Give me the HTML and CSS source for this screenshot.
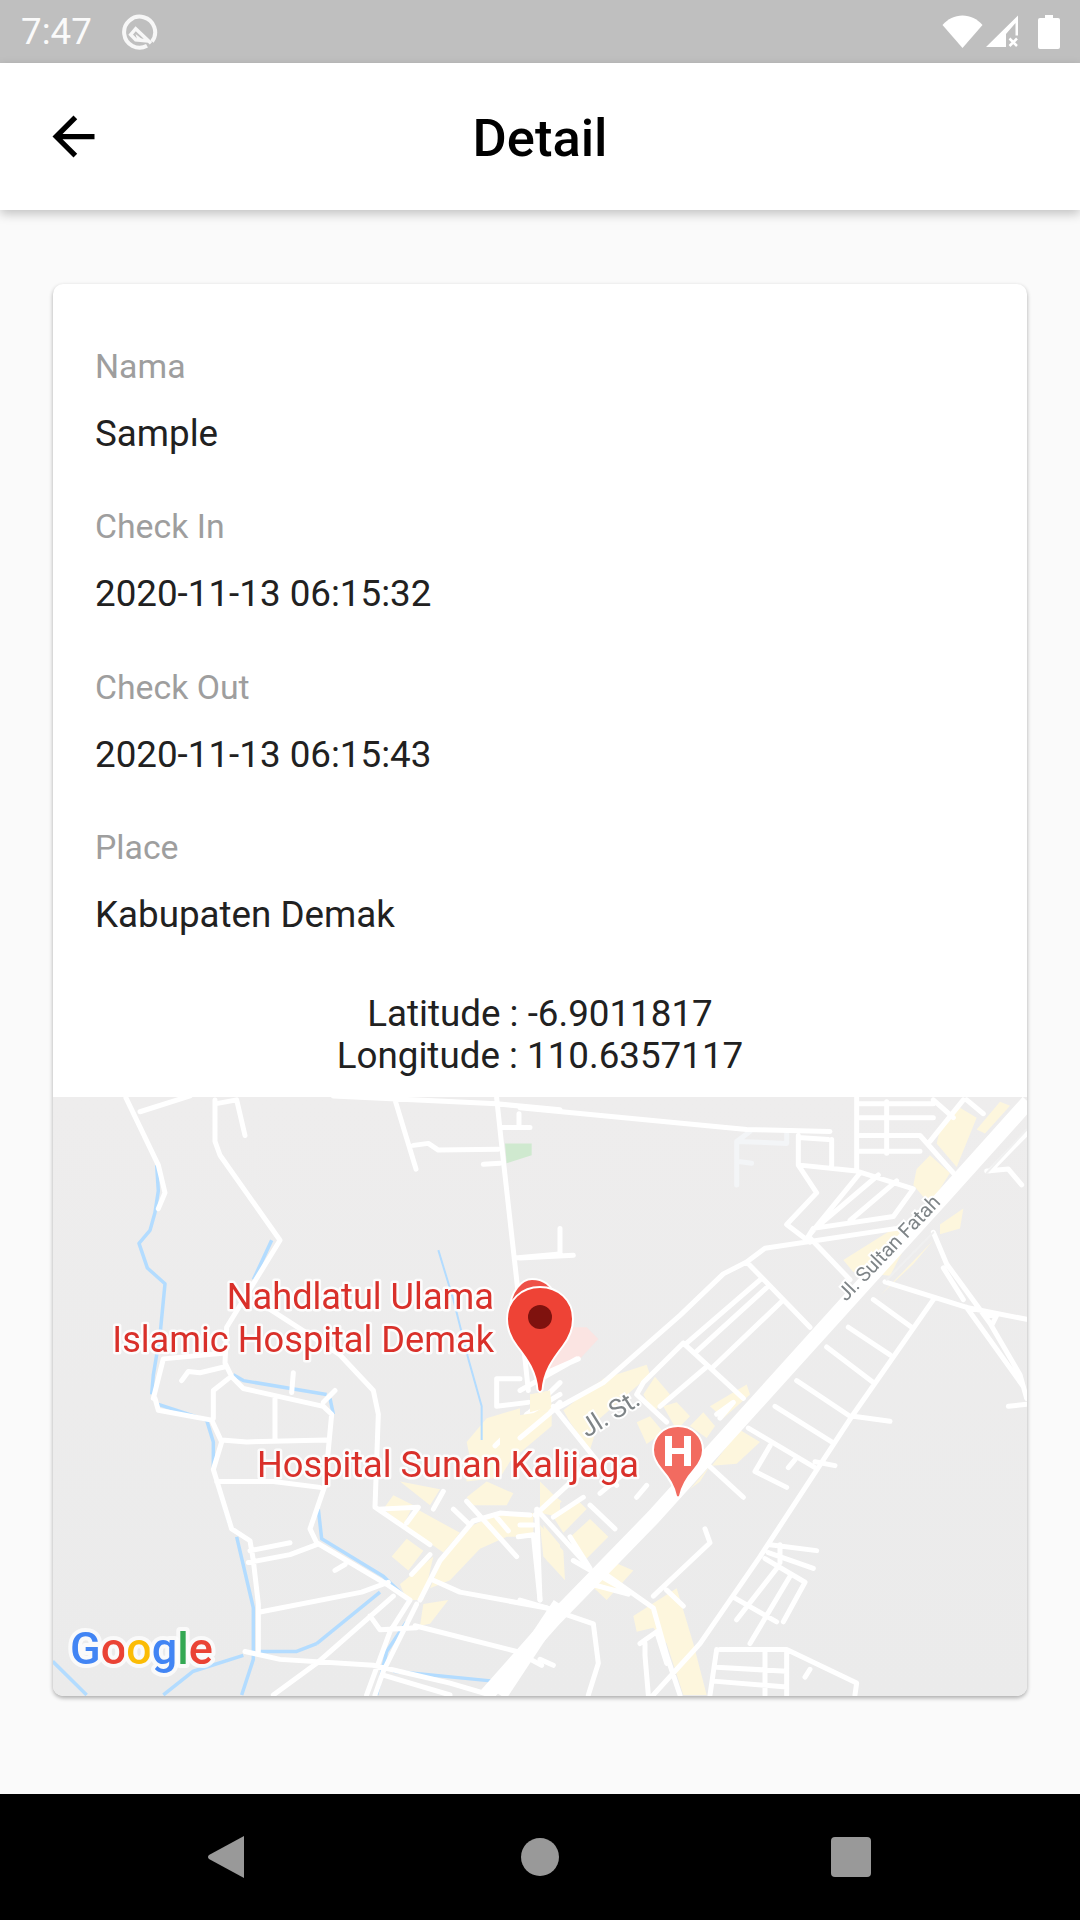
FILE: index.html
```html
<!DOCTYPE html>
<html lang="id">
<head>
<meta charset="utf-8">
<title>Detail</title>
<link rel="stylesheet" href="styles.css">
</head>
<body>
<div class="screen">
  <header class="status">
    <div class="status-left">
      <span class="time">7:47</span>
      <svg class="q-icon" viewBox="0 0 36 36"><path class="ring" d="M30 27.500A15.500 15.500 0 1 0 25 31.800"/><path class="q-line" d="M29 29.300 13.700 14.700 8.700 20.700 13.700 25.700 26.300 27"/><path class="q-fill" d="M13.500 20 20 25H15Z"/></svg>
    </div>
    <div class="status-right">
      <svg class="wifi" viewBox="0 0 41 33"><path d="M20.500 33 .5 10C6 4 12.500 .5 20.500 .5S35 4 40.500 10Z"/></svg>
      <svg class="signal" viewBox="0 0 36 33"><path d="M1 32 33 .5V20.500H30.500V8L21 19V32Z"/><path class="x" d="M24.500 23.500 32 31M32 23.500 24.500 31"/></svg>
      <svg class="battery" viewBox="0 0 22 34"><path d="M7 0H15V3H20Q22 3 22 5V32Q22 34 20 34H2Q0 34 0 32V5Q0 3 2 3H7Z"/></svg>
    </div>
  </header>
  <div class="appbar">
    <svg class="back" viewBox="0 0 24 24"><path d="M20 11H7.830l5.590-5.590L12 4l-8 8 8 8 1.410-1.410L7.830 13H20v-2z"/></svg>
    <h1 class="title">Detail</h1>
  </div>
  <main class="body">
    <section class="card">
      <div class="fields">
        <div class="field"><div class="label">Nama</div><div class="value">Sample</div></div>
        <div class="field"><div class="label">Check In</div><div class="value">2020-11-13 06:15:32</div></div>
        <div class="field"><div class="label">Check Out</div><div class="value">2020-11-13 06:15:43</div></div>
        <div class="field"><div class="label">Place</div><div class="value">Kabupaten Demak</div></div>
      </div>
      <div class="coords">
        <div>Latitude : -6.9011817</div>
        <div>Longitude : 110.6357117</div>
      </div>
      <svg class="map" viewBox="53 1097 974 599" preserveAspectRatio="none">
        <g transform="translate(40 1090) scale(.33333 .3954)">
          <path class="park" d="M1395 135H1475V165L1400 185Z"/>
          <path class="block" d="M1470 770 1530 760 1535 810 1470 820ZM1280 890 1340 830 1440 805V830L1340 910 1290 930ZM1030 1060 1060 1025 1120 1050 1090 1100ZM1130 1060 1260 1120 1210 1170 1100 1105ZM1055 1180 1100 1135 1150 1165 1105 1215ZM1080 990 1200 1010 1170 1050ZM1280 1030 1340 990 1420 1020 1400 1050 1300 1050ZM1210 1180 1300 1100 1380 1070H1480V1130H1400L1320 1160 1230 1240 1170 1260ZM1080 1250 1180 1180 1150 1290H1100ZM1150 1300 1225 1290 1170 1350 1140 1355ZM1500 990 1560 1040V1080L1500 1070ZM1510 1100 1560 1150V1220L1520 1190ZM1330 910 1450 830 1440 900 1380 980 1280 990 1270 940Z"/>
          <path class="water" d="M350 190 355 255 345 310 330 355 297 388 322 450 375 490 360 620 340 720 335 770M355 795 500 835 520 890 520 960 570 1100M590 1130 640 1310V1440L605 1530M835 1060 845 1135 1030 1230 1105 1290M870 780 880 820M580 720 610 735 860 770M640 480 695 380M830 1400 770 1420H650M830 1400 1020 1270M1100 1345 1040 1420 1010 1530M1060 1470 1360 1495M38 1445 140 1530M370 1530 460 1470 610 1430"/>
          <path class="water thin" d="M1195 405 1240 530 1285 680 1325 800V885"/>
          <path class="road" d="M258 20 355 190 375 260 355 300M300 55 450 15M525 25V130L540 165 720 380 640 490 560 600 555 690 575 725 610 755 850 800 875 820 855 1000 810 1110 830 1145 1040 1250 1110 1290M525 35 590 25 615 115M1065 25 1128 200M1120 140 1165 135 1195 152 1375 150M1330 188 1380 185M880 15 1370 35 1560 50M1370 20 1385 140 1430 480 1465 760M1385 95H1470M1437 60V95M1425 425 1560 415M690 555 810 620 900 670 1000 760 1015 820 1005 1055 1170 1150M340 780 370 680 555 665M345 780 355 810 515 835 545 890 520 960 575 1110 630 1140 640 1190 655 1300V1420M425 735 445 712 480 715 555 700M565 730 520 760V830M705 780V880M545 885 620 890 860 885M530 990H700L840 1005M760 715 755 765M850 790 885 760M630 1165 750 1145M625 1195 750 1175 830 1150M660 1320 965 1270 1045 1245M885 1215 915 1200M615 1420 720 1440 1000 1455 1230 1500 1350 1530M700 1530 830 1450 1060 1280M990 1330 1020 1365 1130 1360M1110 1290 1050 1370 980 1530M1130 1300 1030 1470 1005 1530M1180 1240 1260 1270 1520 1310M1125 1355 1430 1420M1030 1480 1230 1530M1140 1290 1200 1190 1300 1090 1380 1070 1470 1075M1370 1080 1405 1115M1435 1130 1480 1125 1500 1290M1100 1095 1135 1055 1015 1060M1115 1225 1170 1175M1180 1060 1210 1015M1240 1060 1290 1100M1280 1040 1430 1180M1365 900 1560 740M1410 920 1560 790M1500 1440 1540 1455M1370 770 1370 800 1465 790M1370 770V730H1440M1460 820 1560 770"/>
          <path class="road wide" d="M1560 1300 1380 1530"/>
        </g>
        <g transform="translate(520 1090) scale(.33333 .3954)">
          <path class="pink" d="M150 600H200L235 630 180 680 90 715 60 700Z"/>
          <path class="block" d="M30 770 90 760 95 800 30 815ZM-60 830 95 810V850L-60 960ZM130 810 250 730 380 695 390 720 240 830 210 910 150 840ZM370 770 405 725 450 770 400 815ZM430 800 470 790 510 825 470 860ZM350 840 390 825 430 865 380 895ZM510 850 550 815 585 850 560 880ZM575 950 660 860 720 890 650 945ZM510 1010 570 950 540 990ZM570 800 680 745 690 770 610 830ZM60 1000 125 1040 90 1075 60 1060ZM100 1080 170 1035 200 1060 130 1120ZM145 1135 210 1085 265 1130 200 1185ZM60 1100 130 1165 135 1240 70 1180ZM270 1190 340 1215 260 1290 210 1250ZM340 1330 415 1290 470 1260 520 1400 560 1530H490L440 1400 400 1360 350 1370ZM970 430 1140 340 1190 340 1110 470 1000 460ZM1080 520 1240 380 1180 440ZM1260 340 1330 300 1320 350 1260 365ZM1190 200 1230 165 1290 210 1230 290 1180 240ZM1260 100 1310 40 1370 70 1310 195 1250 135ZM1370 100 1440 30 1470 40 1395 110Z"/>
          <path class="road faint" d="M650 240V130L690 105M650 130 800 135V110M650 180 695 185"/>
          <path class="road" d="M0 45 680 100 930 105M0 95H25M120 350V418M0 425 160 418M835 115V190L890 260M835 120 925 125M840 190 1010 205 1180 250 1120 320 880 350 865 370 990 480M935 125V195M1010 20V200M1100 30V160M1015 35H1240M1020 70H1240M1020 115H1200L1300 210M1020 155H1200M890 260 800 340 870 385M865 370 1020 210M900 340 1075 215M990 330 1130 230M1240 25 1300 70M1330 25 1230 130M1340 25 1390 60M680 435 735 400 1130 350 1180 340M680 435 610 465 480 570 250 740 100 810 0 880M680 435 870 600M720 480 500 640M740 500 525 665M785 535 580 700M490 640 670 780M490 640 370 740 350 770 440 840M560 700 420 800M1060 530 1175 600M985 600 1110 670M920 650 1060 740M830 735 990 825M765 800 935 890M685 855 885 955M885 940 945 950M1240 530 1000 820 720 1180 540 1400 400 1530M1000 825 1110 838M1095 485 1340 550 1520 580M1240 360 1280 440 1410 590 1500 720 1520 780M1270 450 1330 530M1340 550 1510 750M1400 570H1430L1415 595M1465 800 1520 795M1400 205 1465 200 1505 240M1520 110 1410 205M750 900 705 965 800 1005M825 935 805 955M560 945 670 1030M555 1110 570 1145 400 1280M750 1150 890 1165M745 1170 880 1210M735 1185 855 1245 790 1345M780 1150V1195M645 1285 770 1345M770 1210 650 1340M810 1230 690 1400M600 1415H800L1010 1500 1005 1530M570 1530 590 1415M590 1460 800 1470M580 1495 800 1510M735 1415V1530M800 1415V1530M870 1465 855 1485M240 1215 400 1310 440 1430 480 1530M440 1265 490 1305M360 1400 410 1370 440 1450M375 1400V1430L385 1530M0 1290 80 1310 220 1350 235 1450 205 1530M20 1435 65 1455M50 1060 60 1290M40 1100H0M210 1050 285 1110M100 1080 190 1030M60 1070 210 1210 150 1130M160 1190 325 1270M215 1250 325 1275M100 800 290 1000M45 1075 180 970M240 1020 340 950M350 1030 380 1000M590 820 640 790 600 830M0 760 170 680M80 715 175 680"/>
          <path class="road mid" d="M1520 100 1400 210M1240 360 1100 480"/>
          <path class="road wide" d="M1525 30 1280 260 1000 520 700 800 400 1080 100 1340-100 1530"/>
        </g>
        <text class="road-name road-sm" transform="translate(587 1438) rotate(-32)">Jl. St.</text>
        <text class="road-name" transform="translate(846 1302) rotate(-46)">Jl. Sultan Fatah</text>
        <text class="poi" x="494" y="1309" text-anchor="end">Nahdlatul Ulama</text>
        <text class="poi" x="494" y="1352" text-anchor="end">Islamic Hospital Demak</text>
        <text class="poi" x="257" y="1477">Hospital Sunan Kalijaga</text>
        <g transform="translate(678 1426)">
          <path class="h-pin" d="M-2 70C-4 60-8 53-16 44-22 37-25 31-25 24-25 10-14 0 0 0S25 10 25 24C25 31 22 37 16 44 8 53 4 60 2 70Q0 73-2 70Z"/>
          <path class="h-mark" d="M-13 10H-6V22H6V10H13V40H6V28H-6V40H-13Z"/>
        </g>
        <path class="pin-back" d="M510 1310C510 1291 522 1279 532 1279S553 1284 556 1300L540 1330Z"/>
        <path class="pin" d="M537.500 1390C536 1372 528 1360 517 1346 510 1337 507 1328 507 1319 507 1300 522 1287 540 1287S573 1300 573 1319C573 1328 570 1337 563 1346 552 1360 544 1372 542.500 1390Q540 1394 537.500 1390Z"/>
        <circle class="pin-dot" cx="540" cy="1317" r="12"/>
        <text class="google" x="70" y="1664"><tspan class="g-blue">G</tspan><tspan class="g-red">o</tspan><tspan class="g-yellow">o</tspan><tspan class="g-blue">g</tspan><tspan class="g-green">l</tspan><tspan class="g-red">e</tspan></text>
      </svg>
    </section>
  </main>
  <nav class="navbar">
    <svg class="nav-back" viewBox="0 0 38 44"><path d="M37 1V43L2 24Q0 22 2 20Z"/></svg>
    <span class="nav-home"></span>
    <span class="nav-recent"></span>
  </nav>
</div>
</body>
</html>
```
FILE: styles.css
```css
* { box-sizing: border-box; }
html, body { margin: 0; padding: 0; }
body { font-family: Roboto, "Noto Sans", sans-serif; background: #fafafa; }
.screen { width: 1080px; height: 1920px; display: flex; flex-direction: column; overflow: hidden; }

.status { height: 63px; flex: none; background: #bfbfbf; display: flex; justify-content: space-between; align-items: center; padding: 0 20px 0 21px; color: #fff; }
.status-left { display: flex; align-items: center; gap: 30px; }
.time { font-size: 36.750px; line-height: 44px; color: #fafafa; }
.q-icon { width: 36px; height: 36px; }
.ring { fill: none; stroke: #f7f7f7; stroke-width: 4; }
.q-line { fill: none; stroke: #f7f7f7; stroke-width: 3.500; }
.q-fill { fill: #f7f7f7; }
.status-right { display: flex; align-items: center; gap: 2px; }
.status-right svg { fill: #fff; display: block; }
.wifi { width: 41px; height: 33px; }
.signal { width: 36px; height: 33px; }
.signal .x { fill: none; stroke: #fff; stroke-width: 2.500; }
.battery { width: 22px; height: 34px; margin-left: 15px; }

.appbar { height: 147px; flex: none; position: relative; z-index: 2; background: #fff; box-shadow: 0 4px 10px rgba(0,0,0,.22); display: flex; align-items: center; justify-content: center; padding-top: 2px; }
.back { position: absolute; left: 42px; top: 42px; width: 63px; height: 63px; fill: #000; }
.title { margin: 0; font-size: 52.500px; font-weight: 500; color: #000; line-height: 62px; }

.body { flex: 1; padding: 74px 53px 0; }
.card { background: #fff; border-radius: 10px; box-shadow: 0 2px 4px rgba(0,0,0,.32); overflow: hidden; height: 1412px; display: flex; flex-direction: column; }
.fields { padding: 63px 42px 0; display: flex; flex-direction: column; gap: 51.300px; }
.label { font-size: 33.800px; line-height: 39px; color: #9e9e9e; }
.value { font-size: 36.750px; line-height: 44px; color: #212121; margin-top: 26px; }
.coords { margin-top: 56px; font-size: 36.750px; line-height: 42px; text-align: center; color: #212121; }
.map { display: block; width: 974px; height: 599px; margin-top: auto; filter: blur(.7px); background: linear-gradient(#eeeded, #ebebeb); }

.park { fill: #cfe9cf; }
.pink { fill: #fbe4e2; }
.block { fill: #fdf6dd; }
.water { fill: none; stroke: #b3dcff; stroke-width: 3.500px; stroke-linejoin: round; vector-effect: non-scaling-stroke; }
.water.thin { stroke-width: 2px; }
.road { fill: none; stroke: #fff; stroke-width: 5px; stroke-linecap: round; stroke-linejoin: round; vector-effect: non-scaling-stroke; }
.road.faint { stroke: #f3f5f7; }
.road.mid { stroke-width: 2px; stroke: #f0f0f0; }
.road.wide { stroke-width: 15px; stroke-linecap: butt; }
.road-name { font-size: 20px; fill: #7e8487; stroke: #fff; stroke-width: 4px; paint-order: stroke; }
.road-sm { font-size: 26px; }
.poi { font-size: 36.200px; fill: #d9302a; stroke: #fff; stroke-width: 5px; stroke-opacity: .85; paint-order: stroke; stroke-linejoin: round; }
.h-pin { fill: #f26b60; stroke: #fff; stroke-width: 2; }
.h-mark { fill: #fff; }
.pin { fill: #ee4336; stroke: #fff; stroke-width: 2; }
.pin-back { fill: #ee5148; stroke: #fff; stroke-width: 2; }
.pin-dot { fill: #7f120e; }
.google { font-size: 45px; font-weight: 500; stroke: #fff; stroke-width: 8px; stroke-opacity: .75; paint-order: stroke; stroke-linejoin: round; }
.g-blue { fill: #4285f4; }
.g-red { fill: #ea4335; }
.g-yellow { fill: #fbbc05; }
.g-green { fill: #34a853; }

.navbar { height: 126px; flex: none; background: #000; position: relative; z-index: 1; display: flex; align-items: center; padding-left: 207px; }
.nav-back { width: 38px; height: 44px; fill: #999; }
.nav-home { width: 38px; height: 38px; border-radius: 50%; background: #999; margin-left: 276px; }
.nav-recent { width: 40px; height: 40px; border-radius: 4px; background: #999; margin-left: 272px; }
```
